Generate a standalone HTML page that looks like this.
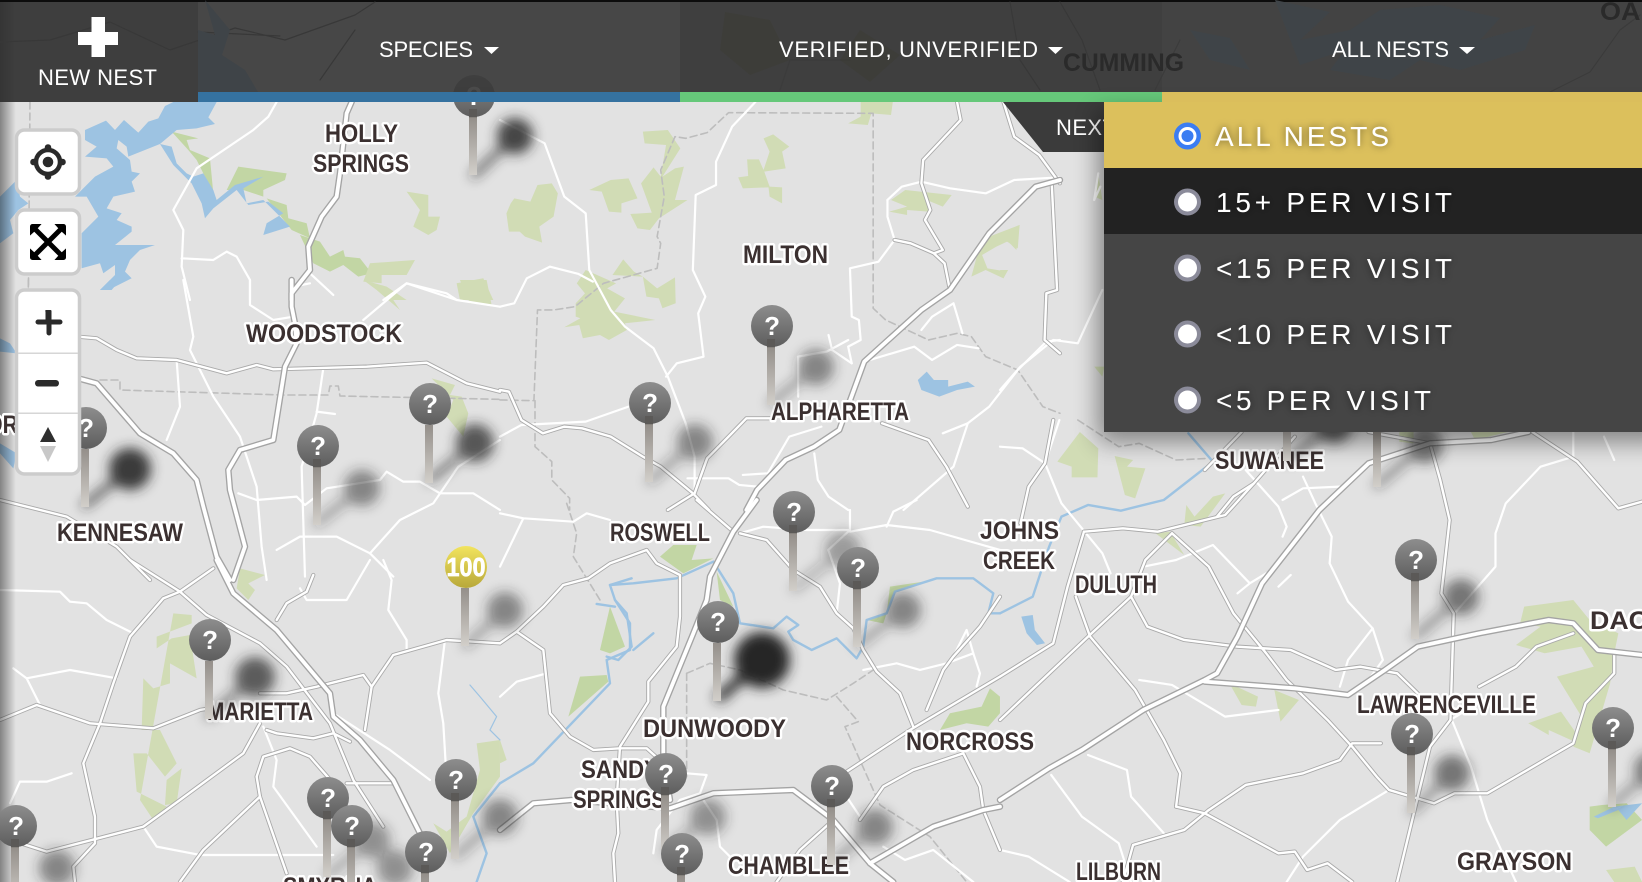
<!DOCTYPE html>
<html><head><meta charset="utf-8"><title>Nest Map</title>
<style>
html,body{margin:0;padding:0;background:#e2e2e2;width:1642px;height:882px;overflow:hidden}
svg{display:block;position:absolute;left:0;top:0}
path{vector-effect:non-scaling-stroke;stroke-linejoin:round;stroke-linecap:round}
text{font-family:"Liberation Sans",sans-serif}
.l{font-weight:700;font-size:25px;fill:#3b3030;stroke:#fff;stroke-width:5px;paint-order:stroke;stroke-linejoin:round}
.q{font-weight:700;font-size:26px;fill:#fff;text-anchor:middle}
.h{font-size:22px;fill:#fff}
.m{font-size:28px;fill:#fff;filter:url(#ts)}
</style></head><body>
<svg width="1642" height="882" viewBox="0 0 1642 882" xmlns="http://www.w3.org/2000/svg">
<defs>
<linearGradient id="ball" x1="0" y1="0" x2="0" y2="1"><stop offset="0" stop-color="#8d8d8d"/><stop offset="1" stop-color="#5d5d5d"/></linearGradient>
<linearGradient id="yball" x1="0" y1="0" x2="0" y2="1"><stop offset="0" stop-color="#f2e45e"/><stop offset="1" stop-color="#b8a83a"/></linearGradient>
<linearGradient id="stick" x1="0" y1="0" x2="0" y2="1"><stop offset="0" stop-color="#5b5957"/><stop offset=".12" stop-color="#5b5957"/><stop offset=".13" stop-color="#948f8a"/><stop offset="1" stop-color="#d2cfca"/></linearGradient>
<linearGradient id="stick2" x1="0" y1="0" x2="0" y2="1"><stop offset="0" stop-color="#948f8a"/><stop offset="1" stop-color="#d2cfca"/></linearGradient>
<linearGradient id="edge" x1="0" y1="0" x2="1" y2="0"><stop offset="0" stop-color="#000" stop-opacity=".42"/><stop offset="1" stop-color="#000" stop-opacity="0"/></linearGradient>
<filter id="b5" filterUnits="userSpaceOnUse" x="0" y="0" width="1642" height="882"><feGaussianBlur stdDeviation="6"/></filter>
<filter id="b12" x="-20%" y="-20%" width="140%" height="140%"><feGaussianBlur stdDeviation="12"/></filter>
<filter id="ts" x="-10%" y="-40%" width="120%" height="180%"><feDropShadow dx="0" dy="0" stdDeviation="4" flood-color="#000" flood-opacity=".55"/></filter>
<g id="p"><circle r="21" fill="url(#ball)"/><rect x="-5" y="13" width="8" height="66" fill="url(#stick)"/></g>
<g id="p2"><circle r="21" fill="url(#ball)"/><rect x="-5" y="21" width="8" height="58" fill="url(#stick2)"/></g>
</defs>

<rect width="1642" height="882" fill="#e2e2e2"/>

<!-- parks -->
<g fill="#d1dcb5">
 <g transform="translate(0,0) scale(.3333)">
  <path fill="#c2d6a4" d="M515,395L595,415L560,420L570,450L630,475L640,580L590,480L565,450Z"/>
  <path fill="#c2d6a4" d="M715,500L860,520L855,540L790,570L790,590L730,570L680,570Z"/>
  <path fill="#c2d6a4" d="M800,595L860,615L865,655L920,670L930,715L875,690Z"/>
  <path fill="#c2d6a4" d="M900,705L960,725L990,770L1030,750L1035,770L1080,775L1115,820L1075,830L1030,795L990,815L940,790Z"/>
  <path d="M1110,790L1245,780L1220,825L1145,825L1145,850L1090,845Z"/>
  <path d="M1220,575L1285,585L1285,650L1320,650L1310,690L1285,705L1240,680L1260,630Z"/>
  <path d="M1370,850L1450,835L1480,900L1380,900Z"/>
 </g>
 <g transform="translate(0,280) scale(.3333)">
  <path d="M1090,0L1160,20L1220,60L1180,60L1200,90L1130,30Z"/><path d="M1380,0L1460,0L1475,75L1410,70Z"/>
  <path d="M1295,295L1365,315L1350,345L1385,350L1405,400L1390,470L1340,410L1360,360Z"/>
 </g>
 <g transform="translate(0,560) scale(.3333)">
  <path d="M520,160L575,165L575,190L470,230L470,265L515,235L570,225L590,355L510,310L510,370L460,385L430,355L425,510L480,510L530,610L495,650L440,580L400,580L410,695L500,740L460,780L420,720Z"/>
  <path d="M500,660L545,625L530,730L495,735Z"/>
  <path d="M720,25L795,45L745,70L765,90L745,120L710,85Z"/>
  <path d="M1430,550L1500,540L1500,650L1420,760L1350,880L1300,790L1340,815L1400,770L1440,630Z"/>
 </g>
 <g transform="translate(500,90) scale(.3571,.3333)">
  <path d="M400,125L470,120L505,175L455,260L490,235L515,230L490,330L525,330L445,385L420,420L385,415L365,372L425,368L395,280L430,232L450,260L465,165L405,160Z"/>
  <path d="M250,300L310,270L360,265L385,325L340,340L340,368L305,365L285,305Z"/>
  <path d="M18,370L30,340L40,325L85,335L105,285L145,280L162,310L150,380L110,410L118,458L70,440L55,425L25,425Z"/>
  <path d="M738,145L765,133L810,170L790,185L800,235L740,245L755,290L790,292L790,340L755,320L752,292L680,295L667,262L695,258L692,208L725,208L738,240L755,185Z"/>
  <path d="M975,100L1010,80L1010,36L1100,36L1095,75L1040,70L1030,105Z"/>
  <path d="M345,508L375,545L400,560L440,595L490,562L492,640L455,655L445,625L410,620L400,560L315,555Z"/>
  <path d="M215,580L240,540L325,580L300,595L350,625L320,665L435,690L350,700L355,720L305,750L280,735L232,745L222,705L180,712L225,685L212,680L212,640L238,610Z"/>
  <path d="M1095,330L1135,300L1265,315L1240,350L1195,330L1200,365L1140,360L1140,375L1090,365L1140,350Z"/>
  <path d="M1370,440L1455,405L1450,475L1420,455L1450,440L1390,470L1350,495L1365,535L1420,545L1410,565L1360,540L1320,560L1340,480Z"/>
 </g>
 <g transform="translate(500,500) scale(.3333)">
  <path fill="#c2d6a4" d="M480,170L520,135L590,135L575,180L640,175L550,220Z"/>
  <path fill="#c2d6a4" d="M650,215L700,320L660,300Z"/>
  <path fill="#c2d6a4" d="M300,450L330,320L375,440L330,460Z"/>
  <path fill="#c2d6a4" d="M205,650L240,530L320,525L325,545Z"/>
  <path fill="#c2d6a4" d="M1100,360L1160,340L1170,260L1270,245L1180,280L1150,370Z"/>
  <path fill="#c2d6a4" d="M1320,690L1350,640L1445,620L1470,565L1500,590L1500,640L1465,680L1400,670Z"/>
  <path d="M0,720L20,780L0,790Z"/>
 </g>
 <g transform="translate(1000,420) scale(.4095,.3333)">
  <path d="M195,36L240,85L238,172L175,172L175,140L140,125Z"/>
  <path d="M280,108L325,120L310,140L355,145L330,235L305,225Z"/>
  <path d="M550,220L520,230L475,290L455,255L450,315L490,320Z"/>
  <path d="M380,340L415,335L450,405Z"/>
  <path d="M1280,560L1400,540L1440,600L1510,640L1500,700L1490,790L1440,1000L1400,980L1420,890L1360,770L1450,740L1420,680L1330,700L1260,675L1320,620L1270,610Z"/>
  <path d="M1290,910L1370,875L1430,980L1340,930L1340,945Z"/>
  <path fill="#c2d6a4" d="M1440,1160L1470,1155L1530,1150L1568,1200L1480,1280L1440,1230Z"/>
  <path d="M1480,1350L1550,1340L1568,1386L1500,1386Z"/>
  <path d="M560,790L630,830L625,860L590,855Z"/><path d="M670,810L730,840L685,905Z"/>
  <path d="M975,36L1010,36L1010,70L975,65Z"/><path d="M1150,36L1240,36L1160,60Z"/>
 </g>
 <g transform="translate(1000,0) scale(.4095,.3333)">
  <path d="M240,520L250,600L230,590Z"/><path d="M0,700L48,675L40,750Z"/><path d="M0,810L20,810L10,830Z"/><path d="M230,1100L255,1100L250,1130Z"/>
 </g>
</g>

<!-- water -->
<g fill="#9dc3e2">
 <g transform="scale(.3333)">
  <path d="M255,390L318,362L345,390L372,360L415,398L445,365L475,355L495,318L520,306L650,306L625,352L645,372L590,385L530,390L480,432L385,470L380,440L355,420L350,445L390,480L395,515L420,520L395,545L405,575L340,590L320,625L365,640L350,660L395,680L395,695L345,735L465,735L420,750L390,780L375,815L395,835L325,870L300,870L345,825L345,795L310,820L300,790L245,805L245,700L295,650L260,590L225,590L285,530L340,500L320,475L255,470L290,440L255,420Z"/>
  <path d="M0,590L50,540L60,590L85,610L55,630L30,660L40,700L0,730Z"/>
  <path d="M480,432L515,440L530,490L560,520L580,530L610,520L640,570L650,600L705,555L790,530L730,565L740,610L790,600L830,640L870,680L790,705L800,670L850,640L805,605L745,615L710,570L640,625L615,655L605,610L575,550L520,495Z"/>
 </g>
 <g transform="translate(0,280) scale(.3333)">
  <path d="M300,30L330,0L360,0L335,30Z"/><path d="M0,175L30,190L50,220L0,215Z"/><path d="M0,490L50,520L40,565L0,520Z"/>
 </g>
 <g transform="translate(500,90) scale(.3571,.3333)"><path d="M1170,870L1195,845L1215,870L1255,870L1255,890L1310,875L1330,890L1280,900L1230,920L1180,900Z"/></g>
 <g transform="translate(1000,420) scale(.4095,.3333)"><path d="M52,590L80,585L85,630L110,670L90,675L65,640Z"/><path d="M1450,1190L1500,1160L1568,1150L1530,1200L1510,1170L1460,1195Z"/></g>
</g>
<g fill="none" stroke="#9dc3e2" stroke-width="2.4">
 <g transform="translate(500,500) scale(.3333)">
  <path d="M0,850L100,790L330,550L320,480L390,450L390,370L345,300L330,255L400,250L530,235L640,185L700,280L720,370L820,385L860,350L895,375L865,395L880,420L935,450L1010,415L1070,475L1090,440L1100,360L1160,340L1185,275L1310,235L1420,235L1480,280L1465,340L1500,340"/>
  <path d="M345,300L380,340L395,440L355,480L320,470M330,255L395,235M290,312L345,320M400,450L460,400"/>
 </g>
 <g transform="translate(1000,420) scale(.4095,.3333)"><path d="M0,580L80,530L120,380L150,290L215,255L295,272L400,240L520,125L460,40"/></g>
 <g transform="translate(0,560) scale(.3333)"><path stroke-width="1.2" d="M1410,375L1440,410L1490,470L1470,510L1500,540"/><path d="M1500,670L1420,770L1460,880L1430,966"/></g>
</g>

<!-- county borders -->
<g fill="none" stroke="#bdbdbd" stroke-width="1.6" stroke-dasharray="7 4">
 <g transform="scale(.3333)"><path d="M90,306L85,900"/></g>
 <g transform="translate(0,280) scale(.3333)"><path d="M85,0L85,40M300,300L360,300L360,330L520,335L850,345L985,345L990,318L1015,318L1020,348L1500,358"/></g>
 <g transform="translate(500,90) scale(.3571,.3333)"><path d="M0,930L95,932L105,660L150,660L210,650L290,580L440,535L450,460L440,440L460,320L450,240L490,140L520,145L580,128L640,68L1045,70L1045,655L1080,690L1200,750L1280,730L1320,740L1360,800L1450,840L1520,950L1568,970"/><path d="M98,932L98,1070L145,1115L145,1170L195,1225L195,1260"/></g>
 <g transform="translate(500,500) scale(.3333)"><path d="M200,10L230,100L220,170L300,300"/><path d="M560,520L630,490L720,510L850,570L980,600L1060,550L1120,510"/><path d="M560,520L560,830"/><path d="M1010,590L1075,665L1035,680L1140,915L1290,1010L1400,1146"/></g>
 <g transform="translate(1000,420) scale(.4095,.3333)"><path d="M190,0L290,80L340,70L430,120L510,115"/></g>
</g>

<!-- minor roads -->
<g fill="none" stroke="#ffffff" stroke-width="2.2">
 <g transform="translate(0,0) scale(.3333)">
  <path d="M830,306L805,350L760,390L590,505L520,630L550,690L545,800L570,900"/><path d="M545,775L640,780L680,755L710,770L750,840L750,900"/><path d="M930,820L1000,885M930,850L880,860"/><path d="M1150,900L1220,850L1340,880L1370,900"/>
 </g>
 <g transform="translate(0,280) scale(.3333)">
  <path d="M550,0L580,170L570,210L640,350L720,470L770,620L785,800L800,900"/><path d="M530,240L540,380L500,480"/><path d="M970,265L950,400L905,560L915,890"/><path d="M950,395L1005,402"/><path d="M715,640L770,660L890,650L915,675L980,625L1140,600L1160,575L1210,605L1260,605L1320,640L1420,640L1500,690"/><path d="M830,810L900,770L1010,770L1110,820L1180,890"/><path d="M1110,820L1200,720L1300,670L1375,560L1500,480"/><path d="M750,0L750,75L820,120L880,110M1090,120L1220,10L1370,60L1500,80"/>
 </g>
 <g transform="translate(0,560) scale(.3333)">
  <path d="M0,90L180,95L210,125L260,130L320,180L400,220"/><path d="M40,325L80,355L210,330L350,355M80,355L120,435"/><path d="M1110,0L1040,120L920,120L900,85"/><path d="M1150,0L1175,60L1165,150L1220,240L1220,275"/><path d="M1335,240L1315,400L1330,490L1340,660"/><path d="M430,800L470,860L600,885L1000,885"/><path d="M215,640L140,665L60,665L30,730"/><path d="M790,500L830,600L820,680L950,860"/><path d="M1000,460L1170,570L1290,660"/>
 </g>
 <g transform="translate(500,90) scale(.3571,.3333)">
  <path d="M0,90L125,160L180,320L240,370L250,540L310,660L350,710L430,775L470,860L520,1000L545,1100L545,1210"/><path d="M715,36L650,110L605,215L605,285L548,315L540,540L575,620L555,670L570,800L495,820L465,860"/><path d="M0,650L40,640L75,565L140,530L220,552L260,575"/><path d="M1105,450L1060,515L980,535L985,680L1005,690L1010,750L975,770L985,820"/><path d="M920,735L930,780L985,820M835,920L835,800L915,785L975,750"/><path d="M1085,330L1125,290L1180,275L1260,295L1360,310L1440,270L1568,262"/><path d="M1085,330L1085,380L1105,450"/><path d="M1020,815L1160,770L1210,810L1280,765L1340,775"/><path d="M1568,750L1530,755L1450,840L1370,950L1310,1000L1240,1030"/><path d="M1310,1000L1270,1130L1130,1260"/><path d="M0,1040L60,1005L240,995L360,950"/><path d="M525,1165L640,1165L670,1185L720,1190"/><path d="M680,1155L750,1150L810,1040L900,1010"/><path d="M880,1090L890,1170L920,1220L975,1260"/><path d="M1270,640L1295,730M1270,640L1210,680L1180,720"/>
 </g>
 <g transform="translate(500,500) scale(.3333)">
  <path d="M70,55L0,200M0,40L70,55L220,65L260,40L330,60"/><path d="M140,520L50,545L0,590"/><path d="M720,100L790,80L920,90L1050,90L1050,30"/><path d="M1160,80L1180,35L1250,0M1500,150L1290,90L1160,75L1050,95"/><path d="M1010,340L1020,250L985,150L1050,90"/><path d="M1090,510L1190,490L1260,510L1340,490L1420,460L1440,520L1430,560"/><path d="M560,820L620,825L600,880L540,900L470,990L460,1060"/><path d="M610,900L650,960L660,1040L700,1080"/><path d="M1150,1040L1215,1080L1300,1050L1420,1146"/><path d="M1420,460L1400,390L1360,470"/><path d="M1040,890L1080,950"/>
 </g>
 <g transform="translate(1000,0) scale(.4095,.3333)">
  <path d="M240,520L230,600L245,560M250,870L190,1030L130,1020L50,1100L0,1170"/>
 </g>
 <g transform="translate(1000,420) scale(.4095,.3333)">
  <path d="M0,80L55,85L110,130L150,250L250,400L270,460M110,130L145,0"/><path d="M600,150L680,260L700,320L690,350M690,240L740,205L830,200"/><path d="M740,170L770,250L810,350L805,430L850,545L910,625L935,720L900,780"/><path d="M910,625L850,720L830,800"/><path d="M1500,120L1475,50M1400,36L1400,110L1320,140L1235,250L1210,340L1210,440L1110,580"/><path d="M350,440L430,420L520,375L610,490M580,520L610,490L650,460M680,500L710,465"/><path d="M340,780L420,795L550,890L680,870"/><path d="M215,1005L310,1050L320,1130L400,1240"/><path d="M125,1065L200,1190L290,1270L320,1386"/><path d="M1100,890L1150,1040L1190,1200L1260,1386"/><path d="M950,1110L830,1200L740,1310L700,1386"/><path d="M0,1290L70,1310L170,1386"/><path d="M1180,840L1100,900"/>
 </g>
</g>

<!-- medium roads: casing -->
<g fill="none" stroke="#a9a9a9" stroke-width="4.200">
 <g transform="translate(0,280) scale(.3333)">
  <path d="M235,170L290,175L350,210L410,235L530,240L680,280L770,255L820,268L1100,260L1280,248L1400,310L1500,335"/><path d="M0,660L200,710L350,800L450,900"/>
 </g>
 <g transform="translate(0,560) scale(.3333)">
  <path d="M0,480L110,435L270,490L460,505L600,450L630,445"/><path d="M300,490L340,370L390,230L490,115L540,95L640,25"/><path d="M390,0L540,95L620,165L780,250L860,320L990,490L1060,660L1150,800"/><path d="M300,490L250,610L285,770L285,850L220,920L225,966"/><path d="M0,830L140,875L430,800L540,720L730,580L780,490"/><path d="M780,710L610,870L540,966"/><path d="M770,650L780,710L860,940"/><path d="M770,650L790,590L870,565L930,590L1000,670"/><path d="M780,400L860,400L950,380L1090,345L1115,380L1095,510"/><path d="M1115,380L1180,285L1340,240L1500,250"/><path d="M1040,670L1180,670"/><path d="M800,510L830,520L940,535L1000,520L1050,545"/><path d="M940,45L920,95L860,130L830,180"/>
 </g>
 <g transform="translate(500,90) scale(.3571,.3333)">
  <path d="M0,900L25,905L60,990L120,1030L180,1010L230,1015L310,1040L400,1100L450,1130L540,1210L585,1260"/><path d="M760,985L690,985L640,1040L580,1105L545,1210L470,1260"/><path d="M1280,36L1290,90L1185,210L1180,280L1205,360L1190,390L1240,480L1215,490L1150,460L1105,450"/><path d="M1215,490L1245,520L1260,600"/><path d="M1410,36L1440,140L1510,195L1568,280"/><path d="M1545,280L1560,600L1530,610L1525,750L1568,790"/><path d="M1070,1000L1200,1050L1250,1130L1310,1250"/>
 </g>
 <g transform="translate(500,500) scale(.3333)">
  <path d="M0,430L50,395L130,320L190,255L265,235L330,190L440,150L470,190L540,225L540,350L530,440L445,545L445,605L360,740L350,900L355,1000L340,1060L345,1146"/><path d="M50,395L130,450L150,640L210,710L280,750L360,745L440,745L490,790"/><path d="M590,0L700,95M720,100L800,120L880,210L960,260L1010,340L1060,385L1090,450L1130,515L1200,580L1240,680"/><path d="M1040,815L1230,690L1500,530"/><path d="M1000,960L900,1050L830,1146"/><path d="M1080,960L1150,860L1240,810L1390,760L1440,860L1450,930L1500,1050"/><path d="M1280,630L1330,510L1360,470L1440,380L1500,290"/>
 </g>
 <g transform="translate(1000,420) scale(.4095,.3333)">
  <path d="M205,335L300,325L385,335L550,285L620,190L720,50"/><path d="M0,770L130,670L165,500L205,335"/><path d="M420,340L510,440L570,580L650,700L700,780L800,900L860,980L920,1070L950,1110L1060,1150L1110,1120L1190,1120L1330,1020L1400,970L1430,850L1500,760L1500,700"/><path d="M320,530L360,620L450,660L580,680L710,690L820,750L880,740L970,760L1020,820"/><path d="M1050,70L1075,180L1098,300L1078,520L1108,580L1100,900"/><path d="M1100,900L1050,980L970,1386"/><path d="M430,1160L500,1180L680,1300L720,1295L750,1350L800,1330L860,1386"/><path d="M430,1160L440,1060L400,960L330,810L220,650L185,530"/><path d="M0,900L215,650L320,530L355,420L420,340"/><path d="M510,1170L600,1095L740,1060L830,1020L860,970L930,970"/><path d="M300,1386L325,1275L450,1230L510,1170"/><path d="M1170,800L1260,740L1310,680L1400,640"/><path d="M530,290L570,230L620,190M130,0L110,130L70,200L50,310"/><path d="M1300,36L1410,125L1510,265L1568,245"/><path d="M590,36L500,150M1050,70L900,36"/>
 </g>
</g>
<!-- medium roads: core -->
<g fill="none" stroke="#ffffff" stroke-width="2.400">
 <g transform="translate(0,280) scale(.3333)">
  <path d="M235,170L290,175L350,210L410,235L530,240L680,280L770,255L820,268L1100,260L1280,248L1400,310L1500,335"/><path d="M0,660L200,710L350,800L450,900"/>
 </g>
 <g transform="translate(0,560) scale(.3333)">
  <path d="M0,480L110,435L270,490L460,505L600,450L630,445"/><path d="M300,490L340,370L390,230L490,115L540,95L640,25"/><path d="M390,0L540,95L620,165L780,250L860,320L990,490L1060,660L1150,800"/><path d="M300,490L250,610L285,770L285,850L220,920L225,966"/><path d="M0,830L140,875L430,800L540,720L730,580L780,490"/><path d="M780,710L610,870L540,966"/><path d="M770,650L780,710L860,940"/><path d="M770,650L790,590L870,565L930,590L1000,670"/><path d="M780,400L860,400L950,380L1090,345L1115,380L1095,510"/><path d="M1115,380L1180,285L1340,240L1500,250"/><path d="M1040,670L1180,670"/><path d="M800,510L830,520L940,535L1000,520L1050,545"/><path d="M940,45L920,95L860,130L830,180"/>
 </g>
 <g transform="translate(500,90) scale(.3571,.3333)">
  <path d="M0,900L25,905L60,990L120,1030L180,1010L230,1015L310,1040L400,1100L450,1130L540,1210L585,1260"/><path d="M760,985L690,985L640,1040L580,1105L545,1210L470,1260"/><path d="M1280,36L1290,90L1185,210L1180,280L1205,360L1190,390L1240,480L1215,490L1150,460L1105,450"/><path d="M1215,490L1245,520L1260,600"/><path d="M1410,36L1440,140L1510,195L1568,280"/><path d="M1545,280L1560,600L1530,610L1525,750L1568,790"/><path d="M1070,1000L1200,1050L1250,1130L1310,1250"/>
 </g>
 <g transform="translate(500,500) scale(.3333)">
  <path d="M0,430L50,395L130,320L190,255L265,235L330,190L440,150L470,190L540,225L540,350L530,440L445,545L445,605L360,740L350,900L355,1000L340,1060L345,1146"/><path d="M50,395L130,450L150,640L210,710L280,750L360,745L440,745L490,790"/><path d="M590,0L700,95M720,100L800,120L880,210L960,260L1010,340L1060,385L1090,450L1130,515L1200,580L1240,680"/><path d="M1040,815L1230,690L1500,530"/><path d="M1000,960L900,1050L830,1146"/><path d="M1080,960L1150,860L1240,810L1390,760L1440,860L1450,930L1500,1050"/><path d="M1280,630L1330,510L1360,470L1440,380L1500,290"/>
 </g>
 <g transform="translate(1000,420) scale(.4095,.3333)">
  <path d="M205,335L300,325L385,335L550,285L620,190L720,50"/><path d="M0,770L130,670L165,500L205,335"/><path d="M420,340L510,440L570,580L650,700L700,780L800,900L860,980L920,1070L950,1110L1060,1150L1110,1120L1190,1120L1330,1020L1400,970L1430,850L1500,760L1500,700"/><path d="M320,530L360,620L450,660L580,680L710,690L820,750L880,740L970,760L1020,820"/><path d="M1050,70L1075,180L1098,300L1078,520L1108,580L1100,900"/><path d="M1100,900L1050,980L970,1386"/><path d="M430,1160L500,1180L680,1300L720,1295L750,1350L800,1330L860,1386"/><path d="M430,1160L440,1060L400,960L330,810L220,650L185,530"/><path d="M0,900L215,650L320,530L355,420L420,340"/><path d="M510,1170L600,1095L740,1060L830,1020L860,970L930,970"/><path d="M300,1386L325,1275L450,1230L510,1170"/><path d="M1170,800L1260,740L1310,680L1400,640"/><path d="M530,290L570,230L620,190M130,0L110,130L70,200L50,310"/><path d="M1300,36L1410,125L1510,265L1568,245"/><path d="M590,36L500,150M1050,70L900,36"/>
 </g>
</g>

<!-- highways: casing -->
<g fill="none" stroke="#a4a4a4" stroke-width="6.500">
 <g transform="scale(.3333)"><path d="M1055,306L1040,340L1020,520L1010,590L965,650L925,740L930,810L875,880L875,900"/></g>
 <g transform="translate(0,280) scale(.3333)"><path d="M875,0L875,80L885,130L890,190L855,260L820,480L720,510L685,570L690,630L735,800L700,900"/><path d="M235,295L290,310L420,460L520,520L590,600L610,680L650,830L690,900"/></g>
 <g transform="translate(0,560) scale(.3333)"><path d="M650,0L700,100L830,210L990,400L1000,470L1080,540L1180,660L1290,880"/></g>
 <g transform="translate(500,90) scale(.3571,.3333)"><path d="M1568,270L1500,290L1370,430L1260,600L1180,660L1020,815L950,1020L880,1070L800,1110L720,1200L690,1260"/></g>
 <g transform="translate(500,500) scale(.3333)"><path d="M770,0L700,95L630,230L620,300L580,400L490,620L490,780L510,900"/><path d="M0,990L100,910L215,900L510,925L640,880L880,870L1000,960L1110,1090L1180,1146"/><path d="M1110,1090L1300,980L1450,930L1500,920"/></g>
 <g transform="translate(1000,420) scale(.4095,.3333)"><path d="M0,1140L120,1045L200,990L350,870L500,780L530,760L580,650L640,490L780,270L900,130L1050,70L1200,60L1290,36"/><path d="M500,785L720,805L850,825L940,750L1020,680L1170,640L1340,600L1400,610L1460,690L1568,705"/></g>
</g>
<!-- highways: core -->
<g fill="none" stroke="#ffffff" stroke-width="3.800">
 <g transform="scale(.3333)"><path d="M1055,306L1040,340L1020,520L1010,590L965,650L925,740L930,810L875,880L875,900"/></g>
 <g transform="translate(0,280) scale(.3333)"><path d="M875,0L875,80L885,130L890,190L855,260L820,480L720,510L685,570L690,630L735,800L700,900"/><path d="M235,295L290,310L420,460L520,520L590,600L610,680L650,830L690,900"/></g>
 <g transform="translate(0,560) scale(.3333)"><path d="M650,0L700,100L830,210L990,400L1000,470L1080,540L1180,660L1290,880"/></g>
 <g transform="translate(500,90) scale(.3571,.3333)"><path d="M1568,270L1500,290L1370,430L1260,600L1180,660L1020,815L950,1020L880,1070L800,1110L720,1200L690,1260"/></g>
 <g transform="translate(500,500) scale(.3333)"><path d="M770,0L700,95L630,230L620,300L580,400L490,620L490,780L510,900"/><path d="M0,990L100,910L215,900L510,925L640,880L880,870L1000,960L1110,1090L1180,1146"/><path d="M1110,1090L1300,980L1450,930L1500,920"/></g>
 <g transform="translate(1000,420) scale(.4095,.3333)"><path d="M0,1140L120,1045L200,990L350,870L500,780L530,760L580,650L640,490L780,270L900,130L1050,70L1200,60L1290,36"/><path d="M500,785L720,805L850,825L940,750L1020,680L1170,640L1340,600L1400,610L1460,690L1568,705"/></g>
</g>

<!-- left edge shade -->
<rect x="0" y="0" width="16" height="882" fill="url(#edge)"/>

<!-- labels -->
<g class="l">
<text x="325" y="142" textLength="73" lengthAdjust="spacingAndGlyphs">HOLLY</text>
<text x="313" y="172" textLength="96" lengthAdjust="spacingAndGlyphs">SPRINGS</text>
<text x="246" y="342" textLength="156" lengthAdjust="spacingAndGlyphs">WOODSTOCK</text>
<text x="57" y="541" textLength="126" lengthAdjust="spacingAndGlyphs">KENNESAW</text>
<text x="743" y="263" textLength="85" lengthAdjust="spacingAndGlyphs">MILTON</text>
<text x="771" y="420" textLength="138" lengthAdjust="spacingAndGlyphs">ALPHARETTA</text>
<text x="610" y="541" textLength="100" lengthAdjust="spacingAndGlyphs">ROSWELL</text>
<text x="980" y="539" textLength="79" lengthAdjust="spacingAndGlyphs">JOHNS</text>
<text x="983" y="569" textLength="72" lengthAdjust="spacingAndGlyphs">CREEK</text>
<text x="1075" y="593" textLength="82" lengthAdjust="spacingAndGlyphs">DULUTH</text>
<text x="1215" y="469" textLength="109" lengthAdjust="spacingAndGlyphs">SUWANEE</text>
<text x="1590" y="629" textLength="58" lengthAdjust="spacingAndGlyphs">DAC</text>
<text x="1357" y="713" textLength="179" lengthAdjust="spacingAndGlyphs">LAWRENCEVILLE</text>
<text x="1457" y="870" textLength="115" lengthAdjust="spacingAndGlyphs">GRAYSON</text>
<text x="1076" y="880" textLength="85" lengthAdjust="spacingAndGlyphs">LILBURN</text>
<text x="906" y="750" textLength="128" lengthAdjust="spacingAndGlyphs">NORCROSS</text>
<text x="643" y="737" textLength="143" lengthAdjust="spacingAndGlyphs">DUNWOODY</text>
<text x="581" y="778" textLength="78" lengthAdjust="spacingAndGlyphs">SANDY</text>
<text x="573" y="808" textLength="92" lengthAdjust="spacingAndGlyphs">SPRINGS</text>
<text x="728" y="874" textLength="121" lengthAdjust="spacingAndGlyphs">CHAMBLEE</text>
<text x="207" y="720" textLength="106" lengthAdjust="spacingAndGlyphs">MARIETTA</text>
<text x="283" y="895" textLength="94" lengthAdjust="spacingAndGlyphs">SMYRNA</text>
<text x="-14" y="433" textLength="32" lengthAdjust="spacingAndGlyphs">OR</text>
</g>

<!-- pin shadows -->
<g fill="#2a2a2a" stroke="#2a2a2a" stroke-width="6" filter="url(#b5)" stroke-linecap="round">
 <g opacity=".85"><circle cx="515" cy="136" r="15"/><line x1="474" y1="175" x2="515" y2="136"/></g>
 <g opacity=".9"><circle cx="130" cy="469" r="18"/><line x1="85" y1="505" x2="130" y2="469"/></g>
 <g opacity=".5"><circle cx="362" cy="488" r="15"/><line x1="317" y1="523" x2="362" y2="488"/></g>
 <g opacity=".75"><circle cx="475" cy="443" r="16"/><line x1="430" y1="480" x2="475" y2="443"/></g>
 <g opacity=".5"><circle cx="816" cy="367" r="15"/><line x1="771" y1="403" x2="816" y2="367"/></g>
 <g opacity=".5"><circle cx="695" cy="442" r="15"/><line x1="650" y1="481" x2="695" y2="442"/></g>
 <g opacity=".38"><circle cx="843" cy="550" r="15"/><line x1="794" y1="589" x2="843" y2="550"/></g>
 <g opacity=".5"><circle cx="903" cy="610" r="15"/><line x1="858" y1="645" x2="903" y2="610"/></g>
 <g opacity=".5"><circle cx="505" cy="610" r="15"/><line x1="466" y1="645" x2="505" y2="610"/></g>
 <g opacity=".72"><circle cx="255" cy="677" r="17"/><line x1="209" y1="716" x2="255" y2="677"/></g>
 <g opacity=".45"><circle cx="372" cy="840" r="15"/><line x1="328" y1="875" x2="372" y2="840"/></g>
 <g opacity=".45"><circle cx="395" cy="868" r="15"/></g>
 <g opacity=".5"><circle cx="500" cy="817" r="15"/><line x1="456" y1="856" x2="500" y2="817"/></g>
 <g opacity=".5"><circle cx="57" cy="868" r="15"/></g>
 <g opacity=".45"><circle cx="708" cy="817" r="15"/><line x1="665" y1="851" x2="708" y2="817"/></g>
 <g opacity=".5"><circle cx="875" cy="827" r="15"/><line x1="831" y1="863" x2="875" y2="827"/></g>
 <g opacity=".58"><circle cx="1461" cy="597" r="15"/><line x1="1416" y1="636" x2="1461" y2="597"/></g>
 <g opacity=".58"><circle cx="1452" cy="773" r="15"/><line x1="1412" y1="811" x2="1452" y2="773"/></g>
 <g opacity=".55"><circle cx="1652" cy="770" r="15"/><line x1="1612" y1="805" x2="1652" y2="770"/></g>
 <g opacity=".7"><circle cx="1334" cy="425" r="15"/><line x1="1288" y1="459" x2="1334" y2="425"/></g>
 <g opacity=".6"><circle cx="1425" cy="445" r="15"/><line x1="1377" y1="485" x2="1425" y2="445"/></g>
</g>
<g fill="#262626" stroke="#262626" stroke-width="10" filter="url(#b5)" stroke-linecap="round"><circle cx="762" cy="660" r="23"/><line x1="720" y1="697" x2="762" y2="660"/></g>

<!-- pins -->
<g transform="translate(474,96)"><use href="#p"/><text class="q" y="9">?</text></g>
<g transform="translate(86,428)"><use href="#p2"/><text class="q" y="9">?</text></g>
<g transform="translate(318,446)"><use href="#p"/><text class="q" y="9">?</text></g>
<g transform="translate(430,404)"><use href="#p2"/><text class="q" y="9">?</text></g>
<g transform="translate(772,326)"><use href="#p"/><text class="q" y="9">?</text></g>
<g transform="translate(650,403)"><use href="#p"/><text class="q" y="9">?</text></g>
<g transform="translate(794,512)"><use href="#p"/><text class="q" y="9">?</text></g>
<g transform="translate(858,568)"><use href="#p"/><text class="q" y="9">?</text></g>
<g transform="translate(718,622)"><use href="#p2"/><text class="q" y="9">?</text></g>
<g transform="translate(210,640)"><use href="#p2"/><text class="q" y="9">?</text></g>
<g transform="translate(16,826)"><use href="#p"/><text class="q" y="9">?</text></g>
<g transform="translate(456,780)"><use href="#p"/><text class="q" y="9">?</text></g>
<g transform="translate(328,798)"><use href="#p"/><text class="q" y="9">?</text></g>
<g transform="translate(352,826)"><use href="#p"/><text class="q" y="9">?</text></g>
<g transform="translate(426,852)"><use href="#p"/><text class="q" y="9">?</text></g>
<g transform="translate(666,774)"><use href="#p"/><text class="q" y="9">?</text></g>
<g transform="translate(682,854)"><use href="#p"/><text class="q" y="9">?</text></g>
<g transform="translate(832,786)"><use href="#p"/><text class="q" y="9">?</text></g>
<g transform="translate(1416,560)"><use href="#p"/><text class="q" y="9">?</text></g>
<g transform="translate(1412,734)"><use href="#p"/><text class="q" y="9">?</text></g>
<g transform="translate(1613,728)"><use href="#p"/><text class="q" y="9">?</text></g>
<g transform="translate(1288,382)"><use href="#p"/></g>
<g transform="translate(1378,408)"><use href="#p"/></g>
<g transform="translate(466,567)"><circle r="21" fill="url(#yball)"/><rect x="-5" y="21" width="8" height="58" fill="url(#stick2)"/><text x="-19.500" y="9" textLength="39" lengthAdjust="spacingAndGlyphs" style="font-weight:700;font-size:26px;fill:#fff;stroke:#fff;stroke-width:.7px">100</text></g>

<!-- header bar -->
<rect x="0" y="0" width="198" height="102" fill="#2c2c2c" fill-opacity=".9"/>
<rect x="198" y="0" width="482" height="92" fill="#363636" fill-opacity=".9"/>
<rect x="680" y="0" width="482" height="92" fill="#2d2d2d" fill-opacity=".9"/>
<rect x="1162" y="0" width="480" height="92" fill="#323232" fill-opacity=".9"/>
<rect x="0" y="0" width="1642" height="2" fill="#0c0c0c"/>
<rect x="198" y="92" width="482" height="10" fill="#3572a0"/>
<rect x="680" y="92" width="482" height="10" fill="#66c87a"/>
<!-- under-header ghost map -->
<g fill="none" stroke="#383838" stroke-width="1.200">
 <path d="M0,42L50,40L110,22L170,50L235,28L285,40L355,15L375,2M198,32L280,36M320,80L355,30"/>
 <path d="M1010,2L1020,60L1040,90M1060,2L1082,40L1100,90"/>
 <path stroke="#3b3b3b" d="M1550,92L1590,72L1620,30L1640,15M780,90L790,60L850,60M1155,90L1180,40"/>
</g>
<g fill="#3f4448">
 <path d="M205,0L230,30L222,55L245,70L258,92L198,92L198,30L215,35Z"/>
 <path d="M1275,0L1330,12L1300,40L1350,30L1380,10L1440,5L1500,18L1480,40L1535,25L1525,50L1460,70L1420,60L1390,80L1330,70L1345,50L1300,65Z"/>
 <path d="M1190,30L1230,38L1250,70L1210,60Z"/>
</g>
<path fill="#39392f" d="M725,12L770,20L790,60L750,75L720,50Z M860,30L900,55L870,82L840,60Z" opacity=".35"/>
<text x="1063" y="71" textLength="121" lengthAdjust="spacingAndGlyphs" font-weight="700" font-size="25" fill="#2a2a2a">CUMMING</text>
<text x="1600" y="20" textLength="60" lengthAdjust="spacingAndGlyphs" font-weight="700" font-size="25" fill="#2a2a2a">OAK</text>

<!-- new nest -->
<path d="M91.500,17h13.500v15h13v13h-13v12h-13.500v-12H78V32h13.500z" fill="#fff"/>
<text class="h" x="38" y="85" textLength="119">NEW NEST</text>
<text class="h" x="379" y="57" textLength="94">SPECIES</text>
<path d="M484,47h15l-7.500,7z" fill="#fff"/>
<text class="h" x="779" y="57" textLength="259">VERIFIED, UNVERIFIED</text>
<path d="M1048,47h15l-7.500,7z" fill="#fff"/>
<text class="h" x="1332" y="57" textLength="117">ALL NESTS</text>
<path d="M1459,47h16l-8,7z" fill="#fff"/>

<!-- next tab -->
<path d="M1003,102H1110V152H1043Z" fill="#3b3b3b"/>
<text class="h" x="1056" y="135" textLength="60">NEXT</text>

<!-- controls -->
<g fill="#fff" stroke="#ccc" stroke-width="3.500">
 <rect x="16.500" y="130" width="63" height="64" rx="8"/>
 <rect x="16.500" y="210" width="63" height="64" rx="8"/>
 <rect x="16.500" y="290" width="63" height="184" rx="8"/>
</g>
<rect x="18" y="352.500" width="60" height="1.500" fill="#d6d6d6"/>
<rect x="18" y="412.500" width="60" height="1.500" fill="#d6d6d6"/>
<!-- locate -->
<circle cx="48" cy="162" r="12" fill="none" stroke="#2a2a2a" stroke-width="4.500"/>
<circle cx="48" cy="162" r="5.300" fill="#2a2a2a"/>
<g fill="#2a2a2a"><circle cx="48" cy="147.500" r="3.300"/><circle cx="48" cy="176.500" r="3.300"/><circle cx="33.500" cy="162" r="3.300"/><circle cx="62.500" cy="162" r="3.300"/></g>
<!-- fullscreen -->
<rect x="30" y="224" width="36" height="36" rx="2.500" fill="#000"/>
<g fill="#fff" transform="translate(48,242)">
 <path d="M-6,-18.500H6L10.250,-13.750L0,-3.500L-10.250,-13.750Z"/>
 <path d="M-6,18.500H6L10.250,13.750L0,3.500L-10.250,13.750Z"/>
 <path d="M-18.500,-6V6L-13.750,10.250L-3.500,0L-13.750,-10.250Z"/>
 <path d="M18.500,-6V6L13.750,10.250L3.500,0L13.750,-10.250Z"/>
</g>
<!-- plus minus -->
<path d="M45.500,310h5a1,1 0 0 1 1,1v8.500H60a2.500,2.500 0 0 1 0,5h-8.500v8.500a2.500,2.500 0 0 1-5,0v-8.500H38a2.500,2.500 0 0 1 0-5h7.500V312a2.500,2.500 0 0 1 0-2z" fill="#2a2a2a"/>
<rect x="35" y="380" width="24" height="6.500" rx="3.200" fill="#2a2a2a"/>
<path d="M48,427l8,15H40z" fill="#2f2f2f"/>
<path d="M40,446h16l-8,16z" fill="#c8c8c8"/>

<!-- dropdown -->
<rect x="1098" y="112" width="570" height="330" fill="#000" opacity=".42" filter="url(#b12)"/>
<rect x="1162" y="92" width="480" height="10" fill="#dbbe5c"/>
<rect x="1104" y="102" width="538" height="66" fill="#dcc05c"/>
<rect x="1104" y="168" width="538" height="66" fill="#222"/>
<rect x="1104" y="234" width="538" height="198" fill="#454545"/>
<circle cx="1187.500" cy="136" r="13.500" fill="#3b7df2"/><circle cx="1187.500" cy="136" r="9" fill="#fff"/><circle cx="1187.500" cy="136" r="6" fill="#3b7df2"/>
<circle cx="1187.500" cy="202" r="13.500" fill="#8b8b9a"/><circle cx="1187.500" cy="202" r="9.500" fill="#fff"/>
<circle cx="1187.500" cy="268" r="13.500" fill="#8b8b9a"/><circle cx="1187.500" cy="268" r="9.500" fill="#fff"/>
<circle cx="1187.500" cy="334" r="13.500" fill="#8b8b9a"/><circle cx="1187.500" cy="334" r="9.500" fill="#fff"/>
<circle cx="1187.500" cy="400" r="13.500" fill="#8b8b9a"/><circle cx="1187.500" cy="400" r="9.500" fill="#fff"/>
<text class="m" x="1215" y="146" textLength="174">ALL NESTS</text>
<text class="m" x="1216" y="212" textLength="236">15+ PER VISIT</text>
<text class="m" x="1216" y="278" textLength="236">&lt;15 PER VISIT</text>
<text class="m" x="1216" y="344" textLength="236">&lt;10 PER VISIT</text>
<text class="m" x="1216" y="410" textLength="215">&lt;5 PER VISIT</text>
</svg>
</body></html>
